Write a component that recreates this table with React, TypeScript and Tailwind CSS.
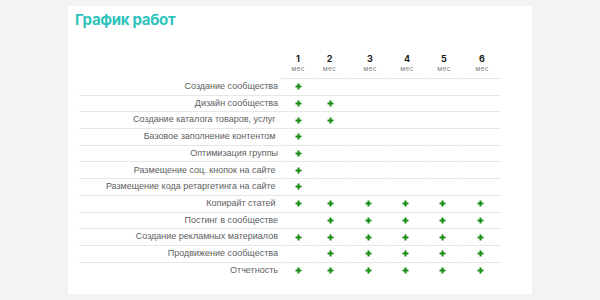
const months = ["1", "2", "3", "4", "5", "6"];

type Row = {
    label: string;
    marks: number[];
};

const rows: Row[] = [
    { label: "Создание сообщества", marks: [1] },
    { label: "Дизайн сообщества", marks: [1, 2] },
    { label: "Создание каталога товаров, услуг\u00a0", marks: [1, 2] },
    { label: "Базовое заполнение контентом\u00a0", marks: [1] },
    { label: "Оптимизация группы", marks: [1] },
    { label: "Размещение соц. кнопок на сайте\u00a0", marks: [1] },
    { label: "Размещение кода ретаргетинга на сайте\u00a0", marks: [1] },
    { label: "Копирайт статей\u00a0", marks: [1, 2, 3, 4, 5, 6] },
    { label: "Постинг в сообществе", marks: [2, 3, 4, 5, 6] },
    { label: "Создание рекламных материалов", marks: [1, 2, 3, 4, 5, 6] },
    { label: "Продвижение сообщества", marks: [2, 3, 4, 5, 6] },
    { label: "Отчетность", marks: [1, 2, 3, 4, 5, 6] },
];

function Plus() {
    return (
        <svg width="7" height="7" viewBox="0 0 7 7">
            <path d="M3.5 0.5V6.5M0.5 3.5H6.5" stroke="#178f17" strokeWidth="2" />
        </svg>
    );
}

const grid = "grid grid-cols-[201px_32px_37px_36px_36px_36px_38px] gap-x-px";

export default function App() {
    return (
        <div className="min-h-[300px] bg-[#f3f3f3] pt-[6px]">
            <div className="mx-auto h-[288px] w-[464px] bg-white">
                <h1 className="pl-[7px] pt-[4px] font-['Inter',sans-serif] text-[15px] font-bold leading-[20px] tracking-[-0.3px] text-[#2ec4bb]">
                    График работ
                </h1>
                <div className="ml-[11px] mt-[23px]">
                    <div className={grid}>
                        <div />
                        {months.map((m, j) => (
                            <div
                                key={m}
                                className={`flex h-[26px] flex-col items-center border-b border-[#e6e6e6] font-['Inter',sans-serif] ${j === 0 ? "pl-[2px]" : ""} ${j === 1 ? "pr-[6px]" : ""}`}
                            >
                                <span className="text-[9px] font-bold leading-[11px] text-[#1a1a1a]">{m}</span>
                                <span className="text-[6.5px] leading-[10px] tracking-[0.3px] text-[#808080]">мес</span>
                            </div>
                        ))}
                    </div>
                    {rows.map((r, i) => (
                        <div key={r.label} className={grid}>
                            <div
                                className={`flex h-[16.7px] items-center justify-end pr-[2px] font-['Liberation_Sans',sans-serif] text-[9px] text-[#5e5e5e] ${i < rows.length - 1 ? "border-b border-[#e6e6e6]" : ""}`}
                            >
                                {r.label}
                            </div>
                            {months.map((m, j) => (
                                <div
                                    key={m}
                                    className={`flex h-[16.7px] items-center justify-center ${j === 0 ? "pl-[2px]" : "pr-[4px]"} ${i < rows.length - 1 ? "border-b border-[#e6e6e6]" : ""}`}
                                >
                                    {r.marks.includes(j + 1) && <Plus />}
                                </div>
                            ))}
                        </div>
                    ))}
                </div>
            </div>
        </div>
    );
}
